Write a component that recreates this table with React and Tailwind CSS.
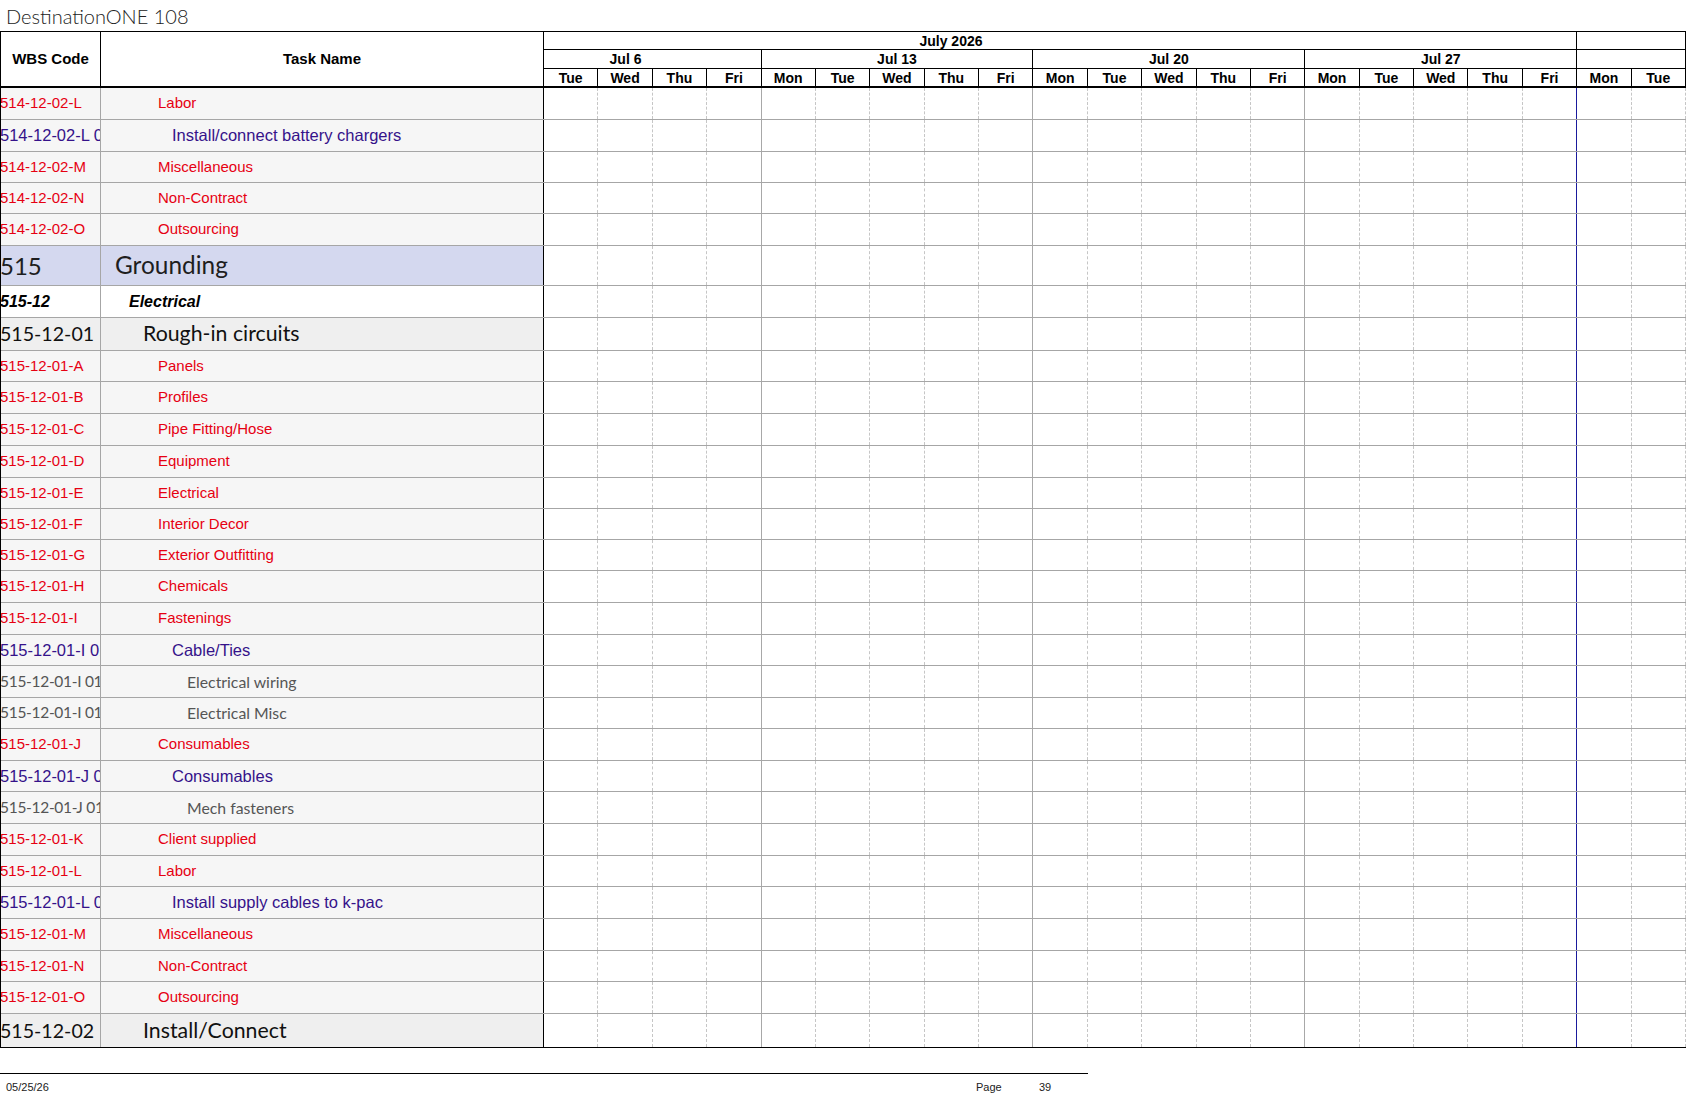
import React from "react";

const DAYS = ["Tue","Wed","Thu","Fri","Mon","Tue","Wed","Thu","Fri","Mon","Tue","Wed","Thu","Fri","Mon","Tue","Wed","Thu","Fri","Mon","Tue"];

const A = "h-[32px]";
const B = "h-[31px]";

const rows = [
  { code: "514-12-02-L", name: "Labor", t: "red", h: A },
  { code: "514-12-02-L 01", name: "Install/connect battery chargers", t: "blue", h: A },
  { code: "514-12-02-M", name: "Miscellaneous", t: "red", h: B },
  { code: "514-12-02-N", name: "Non-Contract", t: "red", h: B },
  { code: "514-12-02-O", name: "Outsourcing", t: "red", h: A },
  { code: "515", name: "Grounding", t: "l1", h: "h-[40px]" },
  { code: "515-12", name: "Electrical", t: "l2", h: "h-[32px]" },
  { code: "515-12-01", name: "Rough-in circuits", t: "l3", h: "h-[33px]" },
  { code: "515-12-01-A", name: "Panels", t: "red", h: B },
  { code: "515-12-01-B", name: "Profiles", t: "red", h: A },
  { code: "515-12-01-C", name: "Pipe Fitting/Hose", t: "red", h: A },
  { code: "515-12-01-D", name: "Equipment", t: "red", h: A },
  { code: "515-12-01-E", name: "Electrical", t: "red", h: B },
  { code: "515-12-01-F", name: "Interior Decor", t: "red", h: B },
  { code: "515-12-01-G", name: "Exterior Outfitting", t: "red", h: B },
  { code: "515-12-01-H", name: "Chemicals", t: "red", h: A },
  { code: "515-12-01-I", name: "Fastenings", t: "red", h: A },
  { code: "515-12-01-I 01", name: "Cable/Ties", t: "blue", h: B },
  { code: "515-12-01-I 01 01", name: "Electrical wiring", t: "gray", h: A },
  { code: "515-12-01-I 01 02", name: "Electrical Misc", t: "gray", h: B },
  { code: "515-12-01-J", name: "Consumables", t: "red", h: A },
  { code: "515-12-01-J 01", name: "Consumables", t: "blue", h: B },
  { code: "515-12-01-J 01 01", name: "Mech fasteners", t: "gray", h: A },
  { code: "515-12-01-K", name: "Client supplied", t: "red", h: A },
  { code: "515-12-01-L", name: "Labor", t: "red", h: B },
  { code: "515-12-01-L 01", name: "Install supply cables to k-pac", t: "blue", h: A },
  { code: "515-12-01-M", name: "Miscellaneous", t: "red", h: A },
  { code: "515-12-01-N", name: "Non-Contract", t: "red", h: B },
  { code: "515-12-01-O", name: "Outsourcing", t: "red", h: A },
  { code: "515-12-02", name: "Install/Connect", t: "l3", h: "h-[33px]" },
];

const STYLES = {
  red: {
    bg: "bg-[#f6f6f6]",
    code: "text-[#e60012] text-[15px] font-['Liberation_Sans',Arial,sans-serif]",
    text: "text-[#e60012] text-[15px] font-['Liberation_Sans',Arial,sans-serif]",
    pl: "pl-[57px]",
  },
  blue: {
    bg: "bg-[#f6f6f6]",
    code: "text-[#35128a] text-[16.5px] font-['Liberation_Sans',Arial,sans-serif]",
    text: "text-[#35128a] text-[16.5px] font-['Liberation_Sans',Arial,sans-serif]",
    pl: "pl-[71px]",
  },
  gray: {
    bg: "bg-[#f6f6f6]",
    code: "text-[#555555] text-[15.5px] font-['Lato',sans-serif] tracking-[-0.3px]",
    text: "text-[#555555] text-[15.8px] font-['Lato',sans-serif]",
    pl: "pl-[86px]",
  },
  l1: {
    bg: "bg-[#d4d8ef]",
    code: "text-[#1e1e1e] text-[24px] font-['Lato',sans-serif]",
    text: "text-[#1e1e1e] text-[24.4px] font-['Lato',sans-serif]",
    pl: "pl-[14px]",
  },
  l2: {
    bg: "bg-white",
    code: "text-black text-[16px] font-bold italic font-['Liberation_Sans',Arial,sans-serif]",
    text: "text-black text-[16px] font-bold italic font-['Liberation_Sans',Arial,sans-serif]",
    pl: "pl-[28px]",
  },
  l3: {
    bg: "bg-[#efefef]",
    code: "text-[#111111] text-[19.6px] font-['Lato',sans-serif]",
    text: "text-[#111111] text-[21.3px] font-['Lato',sans-serif]",
    pl: "pl-[42px]",
  },
};

function bodyLine(i) {
  if (i === 3 || i === 8 || i === 13) return "border-r border-solid border-[#a8a8a8]";
  if (i === 18) return "border-r border-solid border-[#1a1a9c]";
  return "border-r border-dashed border-[#c6c6c6]";
}

function Row({ r, last }) {
  const s = STYLES[r.t];
  return (
    <div className={`flex ${r.h} ${last ? "" : "border-b border-[#a6a6a6]"}`}>
      <div className={`w-[100px] shrink-0 border-r border-[#a6a6a6] ${s.bg} overflow-hidden whitespace-nowrap flex items-center`}>
        <span className={`-ml-[1px] ${s.code}`}>{r.code}</span>
      </div>
      <div className={`w-[443px] shrink-0 border-r border-black ${s.bg} overflow-hidden whitespace-nowrap flex items-center ${s.pl}`}>
        <span className={s.text}>{r.name}</span>
      </div>
      <div className="flex-1 grid grid-cols-[repeat(21,minmax(0,1fr))] bg-white">
        {DAYS.map((d, i) => (
          <div key={i} className={bodyLine(i)} />
        ))}
      </div>
    </div>
  );
}

export default function App() {
  return (
    <div className="w-[1687px] h-[1097px] bg-white text-black font-['Liberation_Sans',Arial,sans-serif] overflow-hidden">
      <div className="h-[31px] pl-[6px] flex items-center text-[20px] font-light font-['Lato',sans-serif] text-[#222222] leading-none">
        DestinationONE 108
      </div>

      <div className="w-[1686px] border-t border-l border-b border-black">
        {/* header */}
        <div className="flex h-[56px]">
          <div className="w-[100px] shrink-0 border-r border-b-2 border-black flex items-center justify-center text-[15px] font-bold">
            WBS Code
          </div>
          <div className="w-[443px] shrink-0 border-r border-b-2 border-black flex items-center justify-center text-[15px] font-bold">
            Task Name
          </div>
          <div className="flex-1 flex flex-col text-[14px] font-bold leading-none">
            <div className="h-[18px] border-b border-black grid grid-cols-[repeat(21,minmax(0,1fr))]">
              <div className="col-span-19 border-r border-black flex items-center overflow-hidden">
                <div className="w-[814px] shrink-0 text-center">July 2026</div>
              </div>
              <div className="col-span-2 border-r border-black" />
            </div>
            <div className="h-[19px] border-b border-black grid grid-cols-[repeat(21,minmax(0,1fr))]">
              <div className="col-span-4 border-r border-black flex items-center overflow-hidden">
                <div className="w-[163px] shrink-0 text-center">Jul 6</div>
              </div>
              <div className="col-span-5 border-r border-black flex items-center justify-center">Jul 13</div>
              <div className="col-span-5 border-r border-black flex items-center justify-center">Jul 20</div>
              <div className="col-span-5 border-r border-black flex items-center justify-center">Jul 27</div>
              <div className="col-span-2 border-r border-black" />
            </div>
            <div className="h-[19px] border-b-2 border-black grid grid-cols-[repeat(21,minmax(0,1fr))]">
              {DAYS.map((d, i) => (
                <div key={i} className="border-r border-black flex items-center justify-center">
                  {d}
                </div>
              ))}
            </div>
          </div>
        </div>

        {/* body */}
        {rows.map((r, i) => (
          <Row key={i} r={r} last={i === rows.length - 1} />
        ))}
      </div>

      {/* footer */}
      <div className="mt-[25px] w-[1088px] border-t border-black" />
      <div className="mt-[7px] flex text-[11px] leading-[12px] text-[#222222]">
        <div className="w-[976px] pl-[6px]">05/25/26</div>
        <div className="w-[63px]">Page</div>
        <div>39</div>
      </div>
    </div>
  );
}
